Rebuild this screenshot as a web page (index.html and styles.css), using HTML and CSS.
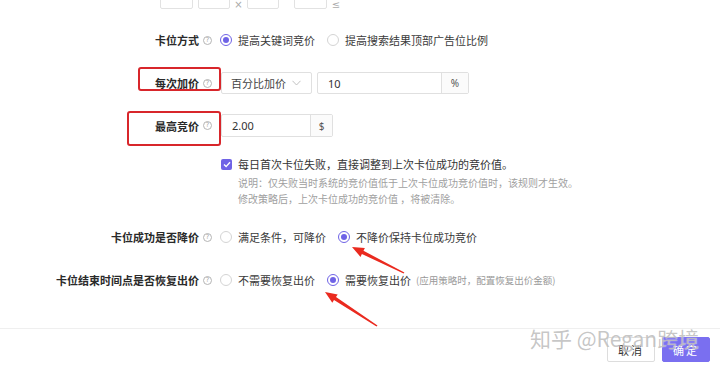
FILE: index.html
```html
<!DOCTYPE html>
<html lang="zh">
<head>
<meta charset="utf-8">
<link rel="stylesheet" href="styles.css">
</head>
<body>
<div class="page">
  <div class="topbar">
    <span class="tbox b1"></span>
    <span class="tbox b2"></span>
    <span class="tsym x">×</span>
    <span class="tbox b3"></span>
    <span class="tbox b4"></span>
    <span class="tsym le">≤</span>
  </div>

  <div class="row r1">
    <div class="label">卡位方式<span class="q">?</span></div>
    <div class="ctrl">
      <span class="opt"><span class="radio on"></span>提高关键词竞价</span>
      <span class="opt"><span class="radio"></span>提高搜索结果顶部广告位比例</span>
    </div>
  </div>

  <div class="row r2">
    <div class="label">每次加价<span class="q">?</span></div>
    <div class="ctrl">
      <div class="select">百分比加价<svg class="chev" width="9" height="6" viewBox="0 0 9 6"><polyline points="0.5,0.8 4.5,5 8.5,0.8" fill="none" stroke="#bbb" stroke-width="0.9"/></svg></div>
      <div class="input w152"><span class="val">10</span><span class="addon a26">%</span></div>
    </div>
  </div>

  <div class="row r3">
    <div class="label">最高竞价<span class="q">?</span></div>
    <div class="ctrl">
      <div class="input w112"><span class="val">2.00</span><span class="addon a21">$</span></div>
    </div>
  </div>

  <div class="row r4">
    <div class="label"></div>
    <div class="checkblock">
      <div class="checkline"><span class="check"><svg width="8" height="7" viewBox="0 0 8 7"><polyline points="1,3.6 3.1,5.6 7,1.2" fill="none" stroke="#fff" stroke-width="1.4"/></svg></span>每日首次卡位失败，直接调整到上次卡位成功的竞价值。</div>
      <div class="note">说明：仅失败当时系统的竞价值低于上次卡位成功竞价值时，该规则才生效。</div>
      <div class="note">修改策略后，上次卡位成功的竞价值 ，将被清除。</div>
    </div>
  </div>

  <div class="row r5">
    <div class="label">卡位成功是否降价<span class="q">?</span></div>
    <div class="ctrl">
      <span class="opt"><span class="radio"></span>满足条件，可降价</span>
      <span class="opt"><span class="radio on"></span>不降价保持卡位成功竞价</span>
    </div>
  </div>

  <div class="row r6">
    <div class="label">卡位结束时间点是否恢复出价<span class="q">?</span></div>
    <div class="ctrl">
      <span class="opt"><span class="radio"></span>不需要恢复出价</span>
      <span class="opt"><span class="radio on"></span>需要恢复出价<span class="hint">(应用策略时，配置恢复出价金额)</span></span>
    </div>
  </div>

  <div class="footer">
    <button class="btn cancel">取消</button>
    <button class="btn ok">确定</button>
  </div>

  <div class="mark m1"></div>
  <div class="mark m2"></div>

  <svg class="arrows" width="720" height="369" viewBox="0 0 720 369">
    <polygon fill="#ea2a1f" points="352,247 364.9,247.9 363.5,250.8 404.4,272.4 403.6,273.6 361.9,254.0 360.5,256.9"/>
    <polygon fill="#ea2a1f" points="325,292 337.7,294.4 336.0,297.1 377.5,325.4 376.5,326.6 334.0,300.1 332.3,302.8"/>
  </svg>

  <div class="watermark">知乎 @Regan跨境</div>
</div>
</body>
</html>
```

FILE: styles.css
```css
html, body {
  margin: 0;
  padding: 0;
  background: #fff;
}
body {
  width: 720px;
  height: 369px;
  overflow: hidden;
  font-family: "Noto Sans CJK SC", "Noto Sans", sans-serif;
  font-size: 11px;
  color: #333;
}
.page {
  position: relative;
  width: 720px;
  height: 369px;
}
.topbar {
  height: 9px;
  overflow: hidden;
  display: flex;
  align-items: flex-end;
  padding-left: 160px;
}
.tbox {
  box-sizing: border-box;
  height: 22px;
  border: 1px solid #e2e2e2;
  border-radius: 2px;
  flex: none;
}
.b1 { width: 33px; }
.b2 { width: 32px; margin-left: 5px; }
.b3 { width: 32px; }
.b4 { width: 33px; margin-left: 15px; }
.tsym {
  flex: none;
  color: #aaa;
  font-size: 10px;
  line-height: 9px;
  height: 9px;
  overflow: hidden;
  text-align: center;
  font-family: "DejaVu Sans", sans-serif;
}
.tsym.x { width: 17px; }
.tsym.le { margin-left: 4px; width: 10px; }

.row {
  display: grid;
  grid-template-columns: 212px auto;
  column-gap: 8px;
  align-items: center;
}
.label {
  display: flex;
  justify-content: flex-end;
  align-items: center;
  gap: 4px;
  font-weight: 700;
  color: #2a2a2a;
  white-space: nowrap;
}
.q {
  box-sizing: border-box;
  width: 9px;
  height: 9px;
  border: 1px solid #b5b5b5;
  border-radius: 50%;
  font-size: 6.5px;
  line-height: 7px;
  text-align: center;
  color: #a5a5a5;
  font-weight: 400;
  font-family: "DejaVu Sans", sans-serif;
}
.ctrl {
  display: flex;
  align-items: center;
}
.r1 { margin-top: 20px; height: 22px; }
.r2 { margin-top: 21px; height: 22px; }
.r3 { margin-top: 20px; height: 23px; }
.r4 { margin-top: 19px; align-items: start; }
.r5 { margin-top: 19px; height: 22px; }
.r6 { margin-top: 21px; height: 22px; }

.opt {
  display: flex;
  align-items: center;
  margin-right: 12px;
  color: #3a3a3a;
  white-space: nowrap;
}
.radio {
  box-sizing: border-box;
  width: 12px;
  height: 12px;
  border: 1px solid #d4d4d4;
  border-radius: 50%;
  margin-right: 6px;
  display: flex;
  align-items: center;
  justify-content: center;
  flex: none;
}
.radio.on {
  border-color: #6f63e6;
}
.radio.on::after {
  content: "";
  width: 6px;
  height: 6px;
  border-radius: 50%;
  background: #6f63e6;
}
.hint {
  color: #999;
  font-size: 9.5px;
  margin-left: 5px;
}

.select {
  box-sizing: border-box;
  width: 91px;
  height: 22px;
  border: 1px solid #e0e0e0;
  border-radius: 2px;
  display: flex;
  align-items: center;
  justify-content: space-between;
  padding: 0 10px 0 9px;
  margin-left: 1px;
  color: #444;
}
.input {
  box-sizing: border-box;
  height: 100%;
  border: 1px solid #e0e0e0;
  border-radius: 2px;
  display: flex;
  align-items: stretch;
  margin-left: 5px;
  color: #333;
}
.r2 .input { height: 22px; }
.r3 .input { height: 23px; margin-left: 1px; }
.w152 { width: 152px; }
.w112 { width: 112px; }
.val {
  flex: 1;
  display: flex;
  align-items: center;
  padding-left: 10px;
  font-family: "Noto Sans", sans-serif;
  font-size: 11px;
}
.addon {
  border-left: 1px solid #e0e0e0;
  background: #fbfbfb;
  display: flex;
  align-items: center;
  justify-content: center;
  color: #555;
  font-size: 10px;
  font-family: "Noto Sans", sans-serif;
}
.a26 { width: 26px; }
.a21 { width: 21px; }

.checkblock {
  padding-left: 1px;
}
.checkline {
  display: flex;
  align-items: center;
  height: 16px;
  color: #333;
  white-space: nowrap;
}
.check {
  box-sizing: border-box;
  width: 11px;
  height: 11px;
  border-radius: 2px;
  background: #6f63e6;
  margin-right: 6px;
  display: flex;
  align-items: center;
  justify-content: center;
  flex: none;
}
.note {
  padding-left: 17px;
  color: #a0a0a0;
  font-size: 10px;
  line-height: 16px;
  white-space: nowrap;
}
.checkline + .note { margin-top: 3px; }

.footer {
  margin-top: 37px;
  border-top: 1px solid #efefef;
  padding-top: 8px;
  padding-right: 10px;
  display: flex;
  justify-content: flex-end;
  gap: 7px;
}
.btn {
  box-sizing: border-box;
  width: 48px;
  height: 25px;
  border-radius: 2px;
  font-family: "Noto Sans CJK SC", sans-serif;
  font-size: 11px;
  padding: 0;
  letter-spacing: 2px;
}
.cancel {
  background: #fff;
  border: 1px solid #ddd;
  color: #333;
}
.ok {
  background: #7a6ff0;
  border: 1px solid #7a6ff0;
  color: #fff;
}

.mark {
  position: absolute;
  box-sizing: border-box;
  border: 2px solid #d8262b;
  border-radius: 3px;
}
.m1 { left: 138px; top: 67px; width: 83px; height: 24px; }
.m2 { left: 127px; top: 111px; width: 94px; height: 35px; }

.arrows {
  position: absolute;
  left: 0;
  top: 0;
  pointer-events: none;
}
.watermark {
  position: absolute;
  left: 530px;
  top: 324px;
  font-size: 21px;
  line-height: 28px;
  color: rgba(150, 150, 150, 0.55);
  text-shadow: 0 0 1px rgba(255,255,255,0.9);
  white-space: nowrap;
  font-family: "Noto Sans CJK SC", "Noto Sans", sans-serif;
}
```
